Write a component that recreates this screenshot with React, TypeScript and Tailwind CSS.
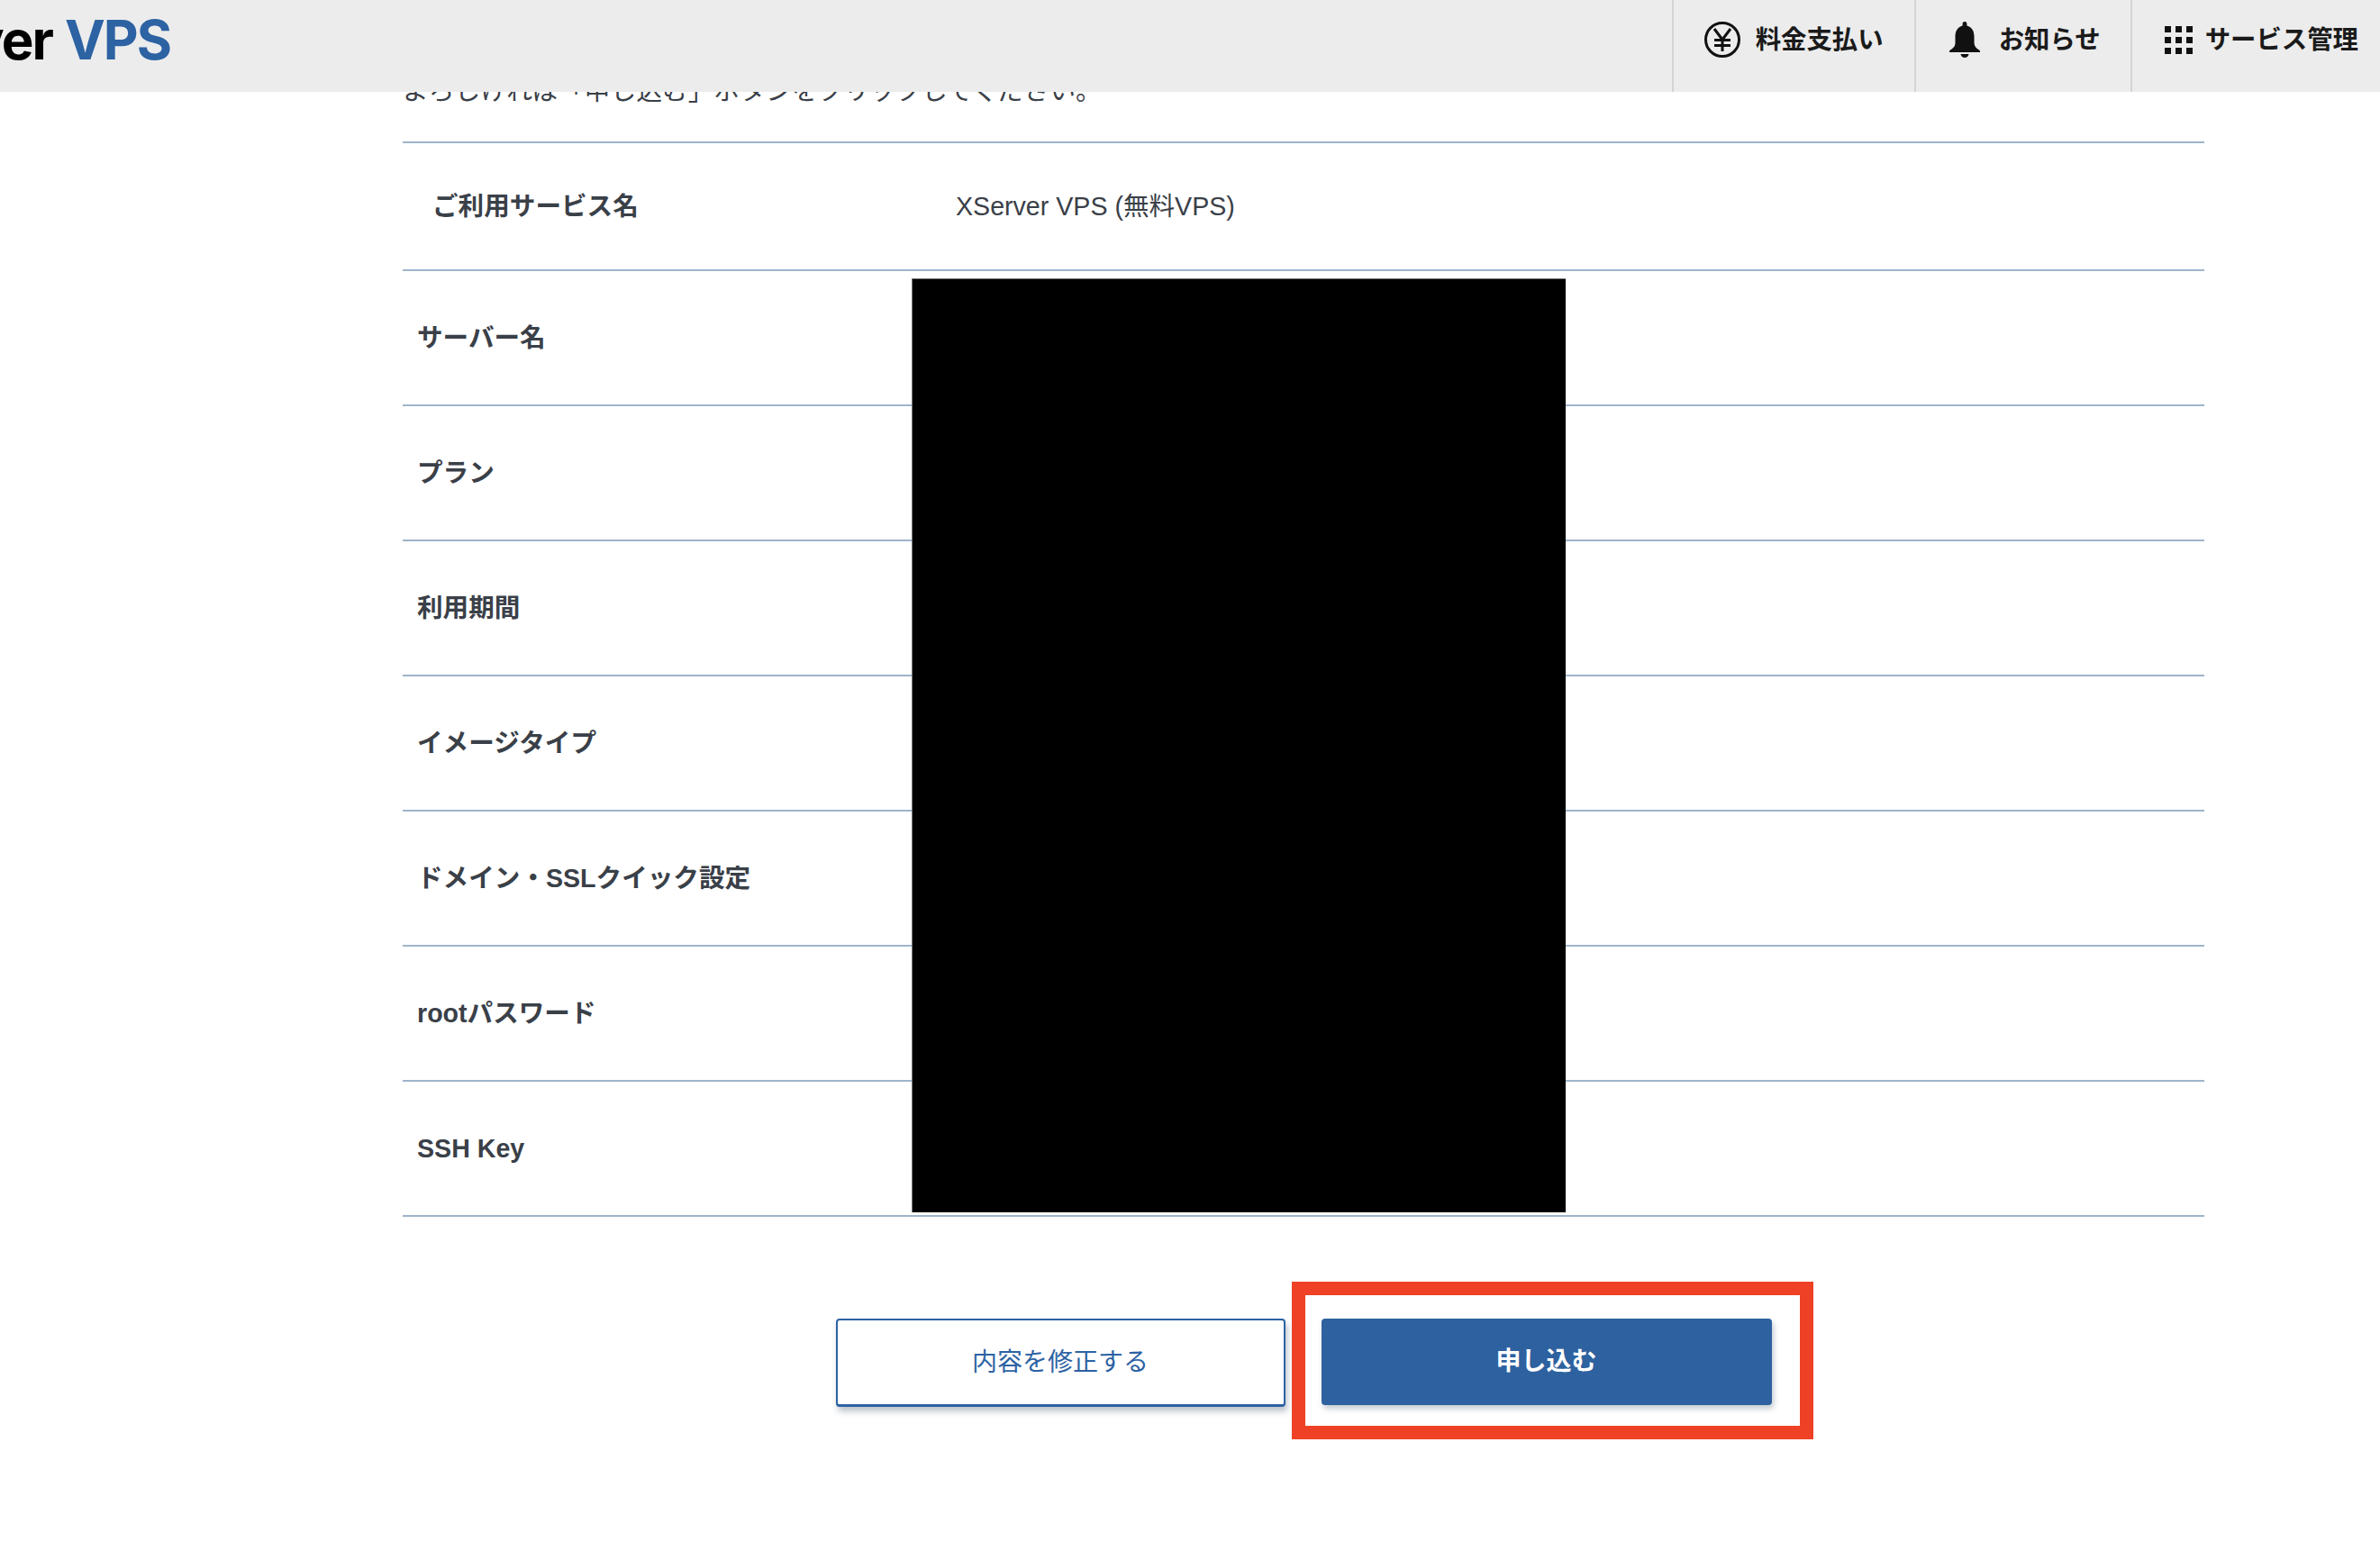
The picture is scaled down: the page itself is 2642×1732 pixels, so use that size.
const rows = [
  "サーバー名",
  "プラン",
  "利用期間",
  "イメージタイプ",
  "ドメイン・SSLクイック設定",
  "rootパスワード",
  "SSH Key",
];

function YenIcon() {
  return (
    <svg width="42" height="42" viewBox="0 0 42 42" fill="none" stroke="#111" strokeWidth="3">
      <circle cx="21" cy="21" r="18.5" />
      <path d="M12 9l9 12 9-12M21 21v13M12 21.5h18M12 27.500h18" strokeWidth="3" />
    </svg>
  );
}

function BellIcon() {
  return (
    <svg width="34" height="40" viewBox="0 0 34 40" fill="#111">
      <path d="M17 0c1.600 0 2.400 1.100 2.400 2.700v1.800C25.200 6 27.500 10.800 27.500 16.500v7c0 3.800 2.200 6 5.500 8 .7.500 1 1 1 1.700V34H0v-.800c0-.700.300-1.200 1-1.700 3.300-2 5.500-4.200 5.500-8v-7C6.500 10.800 8.800 6 14.600 4.500V2.700C14.600 1.100 15.400 0 17 0z" />
      <path d="M12.500 36h9c-.4 2.400-2.200 4-4.500 4s-4.100-1.600-4.500-4z" />
    </svg>
  );
}

function GridIcon() {
  const cells = [0, 12, 24];
  return (
    <svg width="31" height="31" viewBox="0 0 31 31" fill="#111">
      {cells.map((y) =>
        cells.map((x) => <rect key={`${x}-${y}`} x={x} y={y} width="7" height="7" />)
      )}
    </svg>
  );
}

function HeaderItem({ icon, label, gapClass, className }: { icon: React.ReactNode; label: string; gapClass: string; className: string }) {
  return (
    <div className={`flex items-center border-l-2 border-[#d4d4d4] pb-[14px] ${gapClass} ${className}`}>
      {icon}
      <span className="text-[28.4px] font-bold text-[#1a1a1a] whitespace-nowrap">{label}</span>
    </div>
  );
}

export default function App() {
  return (
    <div className="min-h-[1732px] bg-white overflow-hidden font-['Liberation_Sans','Noto_Sans_CJK_JP',sans-serif]">
      {/* Header */}
      <header className="relative z-10 flex h-[102px] items-stretch justify-between bg-[#ececec]">
        <div className="flex w-[189px] justify-end overflow-hidden pt-[8px]">
          <div className="whitespace-nowrap font-['Inter',sans-serif] text-[60px] font-bold leading-[72px] tracking-[-2px] text-black">
            XServer <span className="ml-[2px] text-[#2d62a3]">VPS</span>
          </div>
        </div>
        <div className="flex">
          <HeaderItem icon={<YenIcon />} label="料金支払い" gapClass="gap-[16px]" className="pl-[33px] pr-[34px]" />
          <HeaderItem icon={<BellIcon />} label="お知らせ" gapClass="gap-[21px]" className="pl-[37px] pr-[33px]" />
          <HeaderItem icon={<GridIcon />} label="サービス管理" gapClass="gap-[14px]" className="pl-[36px] pr-[24px]" />
        </div>
      </header>

      {/* Confirm table */}
      <main className="ml-[447px] mt-[-21px] w-[2000px]">
        <p className="text-[28.8px] leading-[40px] text-[#3a4048] whitespace-nowrap">
          よろしければ「申し込む」ボタンをクリックしてください。
        </p>
        <div className="relative mt-[36px] border-t-2 border-[#9fb4cb]">
          <div className="flex h-[142px] items-center border-b-2 border-[#9fb4cb] text-[28.6px] text-[#3a4048]">
            <div className="w-[614px] pl-[33px] font-bold">ご利用サービス名</div>
            <div>XServer VPS (無料VPS)</div>
          </div>
          {rows.map((label) => (
            <div
              key={label}
              className="flex h-[150px] items-center border-b-2 border-[#9fb4cb] pl-[16px] text-[28.6px] font-bold text-[#3a4048]"
            >
              {label}
            </div>
          ))}
          {/* redacted values */}
          <div className="absolute left-[565px] top-[150px] h-[1037px] w-[726px] border-l border-t border-[#777] bg-black" />
        </div>

        <div className="mt-[111px] flex items-center justify-center gap-[40px]">
          <button className="mt-[2px] h-[98px] w-[499px] rounded-[4px] border-2 border-b-[3px] border-[#2d62a3] bg-white text-[28px] text-[#2d62a3] shadow-[2px_5px_7px_rgba(60,80,100,0.35)]">
            内容を修正する
          </button>
          <div className="relative">
            <button className="h-[96px] w-[500px] rounded-[4px] bg-[#2e619f] text-[28px] font-bold text-white shadow-[2px_4px_6px_rgba(60,80,100,0.3)]">
              申し込む
            </button>
            <div className="absolute left-[-33px] right-[-46px] top-[-41px] bottom-[-38px] border-[15px] border-[#ee4125]" />
          </div>
        </div>
      </main>
    </div>
  );
}
